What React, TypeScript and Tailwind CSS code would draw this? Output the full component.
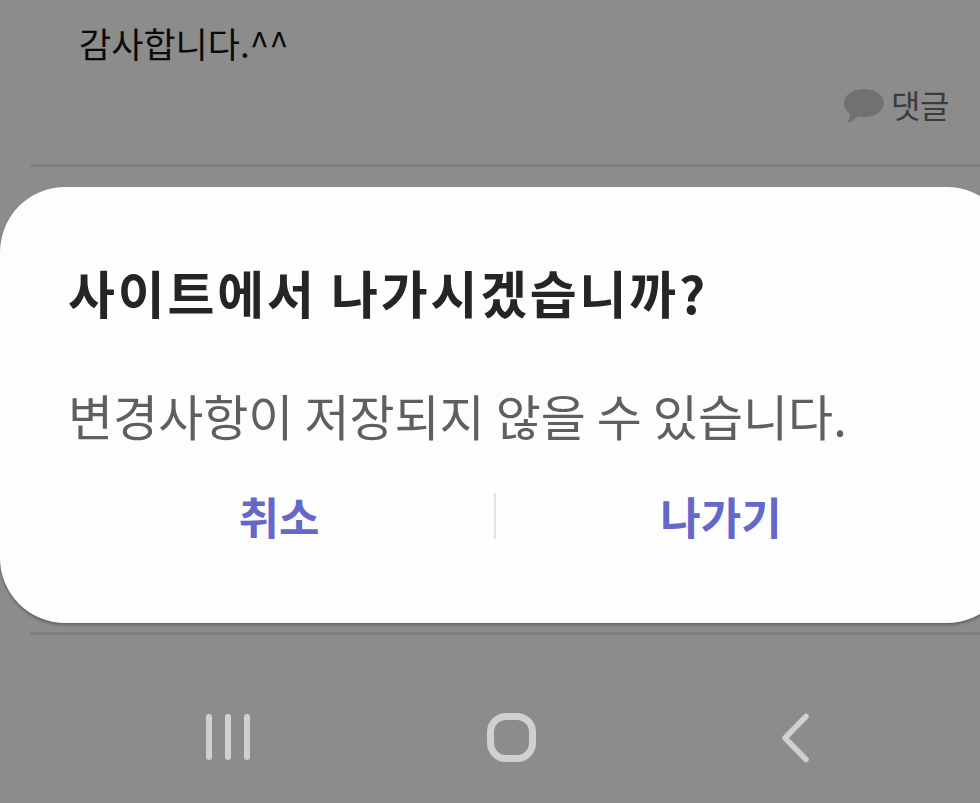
const KR = "font-['Noto_Sans_CJK_KR','Noto_Sans',sans-serif]";

function NavBar() {
  return (
    <div className="flex items-start pt-[78px]">
      <div className="flex w-[44px] ml-[206px] mt-[1px] justify-between">
        <span className="w-[6px] h-[46px] rounded-full bg-[#d0d0d0]" />
        <span className="w-[6px] h-[46px] rounded-full bg-[#d0d0d0]" />
        <span className="w-[6px] h-[46px] rounded-full bg-[#d0d0d0]" />
      </div>
      <span className="ml-[237px] w-[49px] h-[49px] rounded-[19px] border-[7px] border-[#d0d0d0]" />
      <svg className="ml-[245px]" width="30" height="50" viewBox="0 0 30 50" fill="none">
        <path d="M25 3.5 L4 25 L25 46.5" stroke="#d0d0d0" strokeWidth="5.5" strokeLinecap="round" strokeLinejoin="round" />
      </svg>
    </div>
  );
}

export default function App() {
  return (
    <div className={`${KR} w-[980px] h-[803px] overflow-hidden bg-[#8c8c8c] flex flex-col`}>
      <div className="pl-[79px] pt-[20px] text-[35px] leading-[46px] text-[#0a0a0a]">감사합니다.^^</div>
      <div className="flex items-center justify-end gap-[6px] pr-[31px] pt-[16px] h-[59px]">
        <svg className="mt-[5px]" width="42" height="36" viewBox="0 0 42 36">
          <path d="M21 1 C32 1 41 7 41 15 C41 23 32 29 21 29 C19 29 17 29 15 28 C12 32 8 34 4 35 C6 32 7 29 7 26 C3 23 1 19 1 15 C1 7 10 1 21 1 Z" fill="#717171" />
        </svg>
        <span className="text-[32px] leading-[40px] tracking-[-0.5px] text-[#3c3c3c]">댓글</span>
      </div>
      <div className="ml-[30px] mt-[39px] h-[3px] bg-[#808080]" />
      <div className="mt-[20px] h-[436px] w-[1012px] shrink-0 rounded-[65px] bg-[#fdfdfd] shadow-[0_2px_3px_rgba(0,0,0,0.3)] flex flex-col pl-[68px]">
        <div className="pt-[76px] text-[51px] leading-[58px] font-bold tracking-[2.8px] text-[#252525] whitespace-nowrap">사이트에서 나가시겠습니까?</div>
        <div className="pt-[65px] text-[49px] leading-[58px] text-[#5f5f5f] whitespace-nowrap">변경사항이 저장되지 않을 수 있습니다.</div>
        <div className="flex items-center -ml-[4px] mt-[49px] h-[46px]">
          <div className="w-[430px] text-center text-[44px] leading-[46px] font-bold text-[#6468c8]">취소</div>
          <div className="w-[2px] h-[46px] bg-[#e3e3e3]" />
          <div className="w-[450px] text-center text-[44px] leading-[46px] font-bold text-[#6468c8]">나가기</div>
        </div>
      </div>
      <div className="ml-[30px] mt-[9px] h-[3px] shrink-0 bg-[#808080]" />
      <NavBar />
    </div>
  );
}
